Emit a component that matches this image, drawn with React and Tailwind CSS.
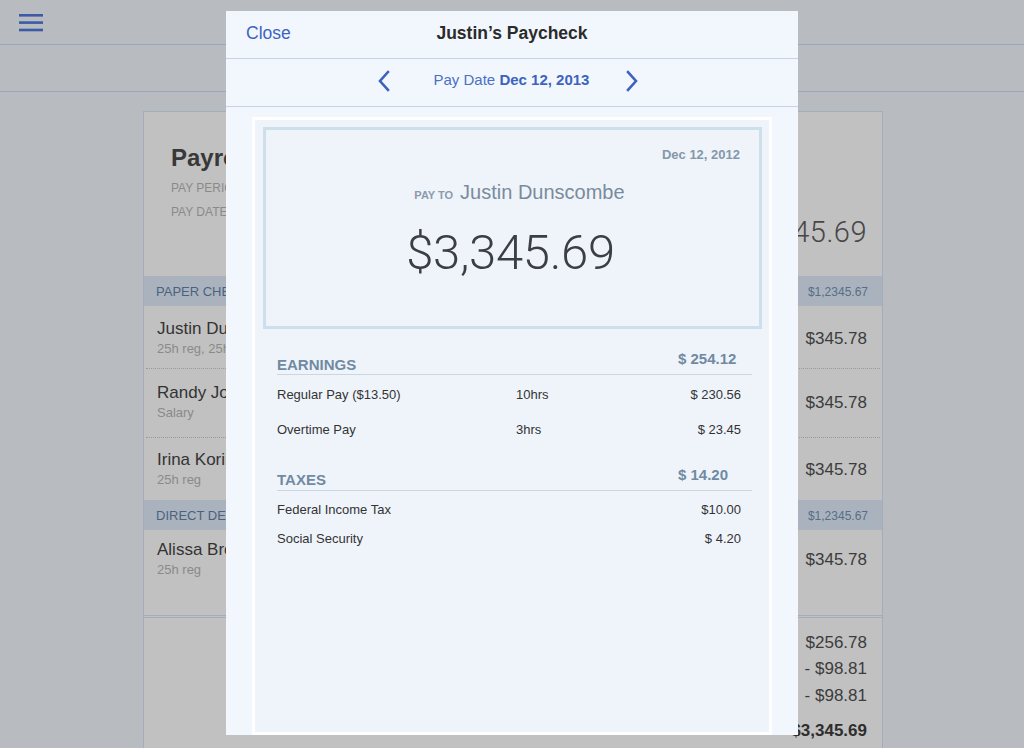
import React from "react";

const Hamburger = () => (
  <svg width="24" height="18" viewBox="0 0 24 18" fill="#3c5ba6">
    <rect x="0" y="0" width="24" height="2.6" />
    <rect x="0" y="7.3" width="24" height="2.6" />
    <rect x="0" y="14.7" width="24" height="2.6" />
  </svg>
);

const Chevron = ({ dir }) => (
  <svg width="14" height="22" viewBox="0 0 14 22" fill="none">
    <path
      d={dir === "left" ? "M11 2 L3 11 L11 20" : "M3 2 L11 11 L3 20"}
      stroke="#3d62be"
      strokeWidth="2.6"
      strokeLinecap="square"
    />
  </svg>
);

const employees = [
  { name: "Justin Dunscombe", sub: "25h reg, 25h ot", h: "h-[63px]", pt: "pt-[13px]", apt: "pt-[23px]", dotted: true },
  { name: "Randy Johnson", sub: "Salary", h: "h-[69px]", pt: "pt-[14px]", apt: "pt-[24px]", dotted: true },
  { name: "Irina Korinova", sub: "25h reg", h: "h-[62px]", pt: "pt-[12px]", apt: "pt-[22px]", dotted: false },
];

const SectionBand = ({ label }) => (
  <div className="flex h-[30px] items-center justify-between bg-[#aab3bd] pl-[12px] pr-[14px] pt-[2px]">
    <span className="text-[13px] text-[#4a6280]">{label}</span>
    <span className="text-[12px] text-[#566e88]">$1,2345.67</span>
  </div>
);

const EmployeeRow = ({ e }) => (
  <div
    className={`mx-[2px] flex justify-between pl-[11px] pr-[13px] ${e.h} ${
      e.dotted ? "border-b border-dotted border-[#9a9a9a]" : ""
    }`}
  >
    <div className={e.pt}>
      <div className="text-[17px] leading-[20px] text-[#333]">{e.name}</div>
      <div className="text-[13px] leading-[20px] text-[#8a8a8a]">{e.sub}</div>
    </div>
    <div className={`text-[17px] leading-[20px] text-[#3c3c3c] ${e.apt}`}>$345.78</div>
  </div>
);

const earnings = [
  { label: "Regular Pay ($13.50)", hrs: "10hrs", amt: "$ 230.56" },
  { label: "Overtime Pay", hrs: "3hrs", amt: "$ 23.45" },
];

const taxes = [
  { label: "Federal Income Tax", amt: "$10.00" },
  { label: "Social Security", amt: "$ 4.20" },
];

const SectionHead = ({ title, amount, h, tb }) => (
  <div className={`flex items-end justify-between border-b border-[#cad7e3] ${h}`}>
    <span className={`text-[15px] font-bold leading-[16px] text-[#6f8aa2] ${tb}`}>{title}</span>
    <span className="mb-[7px] w-[74px] text-[15px] font-bold leading-[16px] text-[#6f8aa2]">{amount}</span>
  </div>
);

export default function App() {
  return (
    <div className="relative h-[748px] w-[1024px] overflow-hidden bg-[#b8bbc0] font-['Liberation_Sans',Arial,sans-serif]">
      {/* page behind the modal */}
      <header className="flex h-[45px] items-start border-b border-[#9aa8bd] pl-[19px] pt-[14px]">
        <Hamburger />
      </header>
      <div className="h-[47px] border-b border-[#9aa8bd]" />

      <main className="ml-[143px] mt-[19px] w-[740px] border-x border-t border-[#a3aebd] bg-[#c1c1c1]">
        <div className="flex h-[164px] justify-between pl-[27px] pr-[15px]">
          <div className="pt-[32px]">
            <h2 className="text-[24px] font-bold leading-[28px] text-[#383838]">Payroll</h2>
            <div className="mt-[4px] text-[12px] leading-[24px] text-[#8a8a8a]">PAY PERIOD Dec 1 - Dec 12, 2013</div>
            <div className="text-[12px] leading-[24px] text-[#8a8a8a]">PAY DATE Dec 12, 2013</div>
          </div>
          <div className="pt-[102px] font-['Roboto',sans-serif] text-[29px] font-light leading-[36px] tracking-[0.5px] text-[#474747]">
            $3,345.69
          </div>
        </div>

        <SectionBand label="PAPER CHECKS" />
        {employees.map((e) => (
          <EmployeeRow key={e.name} e={e} />
        ))}
        <SectionBand label="DIRECT DEPOSIT" />
        <div className="flex h-[88px] justify-between border-b-[3px] border-double border-[#a3aebd] pl-[13px] pr-[15px]">
          <div className="pt-[10px]">
            <div className="text-[17px] leading-[20px] text-[#333]">Alissa Brown</div>
            <div className="text-[13px] leading-[20px] text-[#8a8a8a]">25h reg</div>
          </div>
          <div className="pt-[20px] text-[17px] leading-[20px] text-[#3c3c3c]">$345.78</div>
        </div>

        <div className="flex h-[140px] flex-col items-end pr-[15px] text-[17px] leading-[20px] text-[#3c3c3c]">
          <div className="mt-[15px]">$256.78</div>
          <div className="mt-[6px]">- $98.81</div>
          <div className="mt-[7px]">- $98.81</div>
          <div className="mt-[15px] font-bold text-[#2e2e2e]">$3,345.69</div>
        </div>
      </main>

      {/* paycheck modal */}
      <div className="absolute left-[226px] top-[11px] flex h-[724px] w-[572px] flex-col bg-[#f2f7fe]">
        <div className="grid h-[48px] grid-cols-[1fr_auto_1fr] items-center border-b border-[#c3d4e8] pb-[2px]">
          <button className="justify-self-start pl-[20px] text-[17.5px] text-[#3d64c2]">Close</button>
          <h1 className="text-[17.5px] font-bold text-[#2b2b2b]">Justin’s Paycheck</h1>
          <span />
        </div>
        <div className="flex h-[48px] items-center justify-center border-b border-[#c3d4e8] pb-[4px] pr-[8px]">
          <Chevron dir="left" />
          <div className="ml-[43px] mr-[36px] text-[15px] text-[#4a70c3]">
            Pay Date <span className="font-bold text-[#3d63bf]">Dec 12, 2013</span>
          </div>
          <Chevron dir="right" />
        </div>

        <div className="flex flex-1 flex-col px-[26px] pt-[10px]">
          <div className="flex-1 border-[3px] border-b-0 border-white bg-[#eff4fb]">
            <div className="ml-[8px] mr-[7px] mt-[7px] flex h-[202px] flex-col border-[3px] border-[#cddfea]">
              <div className="self-end pr-[19px] pt-[18px] text-[13px] font-bold leading-[14px] text-[#8597a8]">
                Dec 12, 2012
              </div>
              <div className="mt-[18px] flex items-baseline justify-center pl-[14px] leading-[24px]">
                <span className="mr-[7px] text-[11px] font-bold text-[#8a9bac]">PAY TO</span>
                <span className="text-[20px] text-[#7a8b9c]">Justin Dunscombe</span>
              </div>
              <div className="mt-[21px] pr-[4px] text-center font-['Roboto',sans-serif] text-[49px] font-light leading-[50px] tracking-[-0.3px] text-[#3b3e44]">
                $3,345.69
              </div>
            </div>

            <div className="ml-[22px] mr-[17px]">
              <div className="mt-[21px]">
                <SectionHead title="EARNINGS" amount="$ 254.12" h="h-[25px]" tb="mb-[1px]" />
              </div>
              <div className="pt-[2px]">
                {earnings.map((r) => (
                  <div key={r.label} className="flex h-[35px] items-center text-[13px] text-[#333]">
                    <span className="w-[239px]">{r.label}</span>
                    <span className="flex-1">{r.hrs}</span>
                    <span className="pr-[11px] text-right">{r.amt}</span>
                  </div>
                ))}
              </div>
              <SectionHead title="TAXES" amount="$ 14.20" h="h-[44px]" tb="mb-[2px]" />
              <div className="pt-[4px]">
                {taxes.map((r) => (
                  <div key={r.label} className="flex h-[29px] items-center justify-between text-[13px] text-[#333]">
                    <span>{r.label}</span>
                    <span className="pr-[11px]">{r.amt}</span>
                  </div>
                ))}
              </div>
            </div>
          </div>
          <div className="h-[3px] bg-white" />
        </div>
      </div>
    </div>
  );
}
